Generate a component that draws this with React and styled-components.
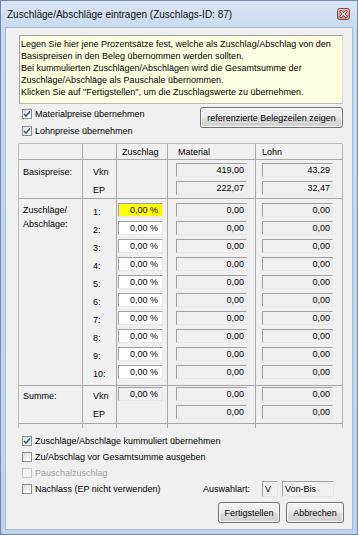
import React from 'react';
import styled, { createGlobalStyle } from 'styled-components';

const Global = createGlobalStyle`
  html, body { margin: 0; padding: 0; width: 358px; height: 535px; overflow: hidden; background: #fff; }
  body { font-family: "Liberation Sans", Arial, sans-serif; font-size: 9px; color: #000; }
  * { box-sizing: border-box; }
`;

const Window = styled.div`
  width: 358px;
  height: 535px;
  border: 1px solid #6f88aa;
  background: linear-gradient(180deg, #dbe6f4 0px, #c9daef 26px, #c0d3ea 100%);
  display: flex;
  flex-direction: column;
`;

const TitleBar = styled.div`
  height: 26px;
  flex: none;
  display: flex;
  align-items: center;
  justify-content: space-between;
  padding: 0 7px 0 6px;
`;

const Title = styled.span`
  font-family: "Liberation Sans", Arial, sans-serif;
  font-size: 10px;
  color: #111;
  white-space: nowrap;
`;

const Client = styled.div`
  flex: 1;
  margin: 0 4px 4px 4px;
  border: 1px solid #a7b9d0;
  background: #f0f0f0;
  display: flex;
  flex-direction: column;
`;

const InfoBox = styled.div`
  margin: 7px 9px 0 13px;
  height: 69px;
  background: #ffffe1;
  border: 1px solid;
  border-color: #a0a0a0 #dcdcdc #b8b8b8 #a0a0a0;
  padding: 2px 1px;
  line-height: 12px;
`;

const Line = styled.div`
  white-space: nowrap;
`;

const TopRow = styled.div`
  margin: 1px 9px 0 16px;
  height: 34px;
  display: flex;
  justify-content: space-between;
  align-items: flex-start;
`;

const CheckCol = styled.div`
  display: flex;
  flex-direction: column;
`;

const CheckItem = styled.div`
  display: flex;
  align-items: center;
  gap: 3px;
  height: ${p => p.$h || 17}px;
  color: ${p => (p.$disabled ? '#a3a3a3' : '#000')};
  white-space: nowrap;
  flex: ${p => (p.$grow ? 1 : 'none')};
`;

const Box = styled.span`
  width: 10px;
  height: 10px;
  flex: none;
  border: 1px solid ${p => (p.$disabled ? '#c6c6c6' : '#8e8f8f')};
  background: ${p => (p.$disabled ? '#f4f4f4' : 'linear-gradient(135deg, #d9d9d9 0%, #f4f4f4 60%, #ffffff 100%)')};
  display: flex;
  align-items: center;
  justify-content: center;
`;

const Button = styled.button`
  width: ${p => p.$w}px;
  height: 21px;
  margin-top: ${p => p.$mt || 0}px;
  padding: 0;
  border: 1px solid #707070;
  border-radius: 3px;
  background: linear-gradient(180deg, #f2f2f2 0%, #ebebeb 48%, #dddddd 52%, #cfcfcf 100%);
  box-shadow: inset 0 0 0 1px #fbfbfb;
  font-family: "Liberation Sans", Arial, sans-serif;
  font-size: 9px;
  color: #000;
  white-space: nowrap;
`;

const Table = styled.div`
  margin: 4px 9px 0 12px;
  border: 1px solid #b9b9b9;
  border-bottom: none;
  border-radius: 2px 2px 0 0;
`;

const Section = styled.div`
  display: grid;
  grid-template-columns: 64px 34px 51px 88px 86px;
  height: ${p => p.$h}px;
  border-top: ${p => (p.$first ? 'none' : '1px solid #a6a6a6')};
`;

const Col = styled.div`
  display: flex;
  flex-direction: column;
  gap: 4px;
  padding-top: ${p => p.$pt || 0}px;
  padding-left: ${p => p.$pl || 0}px;
  border-right: ${p => (p.$last ? 'none' : '1px solid #a6a6a6')};
  align-items: flex-start;
  justify-content: ${p => (p.$center ? 'center' : 'flex-start')};
`;

const Label = styled.div`
  height: 14px;
  line-height: 14px;
  white-space: nowrap;
`;

const BigLabel = styled.div`
  line-height: 14px;
`;

const Field = styled.div`
  width: ${p => p.$w}px;
  height: 14px;
  margin-left: ${p => p.$ml || 0}px;
  border: 1px solid;
  border-color: #a0a0a0 #e6e6e6 #e6e6e6 #a0a0a0;
  background: ${p => (p.$hl ? '#ffff00' : p.$edit ? '#ffffff' : '#f0f0f0')};
  text-align: ${p => (p.$left ? 'left' : 'right')};
  padding: 0 ${p => p.$pr ?? 2}px 0 ${p => p.$pl ?? 0}px;
  line-height: 12px;
  white-space: nowrap;
`;

const BottomChecks = styled.div`
  margin: 5px 0 0 16px;
  display: flex;
  flex-direction: column;
`;

const LastRow = styled.div`
  display: flex;
  align-items: center;
  height: 16px;
  padding-right: 18px;
`;

const SelLabel = styled.span`
  width: 59px;
  flex: none;
  white-space: nowrap;
`;

const SelBox = styled.div`
  width: ${p => p.$w}px;
  height: 16px;
  margin-left: ${p => p.$ml || 0}px;
  border: 1px solid;
  border-color: #a0a0a0 #e6e6e6 #e6e6e6 #a0a0a0;
  background: #f0f0f0;
  padding-left: 2px;
  line-height: 14px;
  white-space: nowrap;
`;

const ButtonRow = styled.div`
  margin: 5px 8px 0 0;
  display: flex;
  justify-content: flex-end;
  gap: 6px;
`;

const CloseButton = () => (
  <svg width="13" height="12" viewBox="0 0 13 12">
    <defs>
      <linearGradient id="cg" x1="0" y1="0" x2="0" y2="1">
        <stop offset="0" stopColor="#e9c2bd" />
        <stop offset="1" stopColor="#c98a84" />
      </linearGradient>
    </defs>
    <rect x="0.5" y="0.5" width="12" height="11" rx="2" fill="url(#cg)" stroke="#8a4a46" />
    <path d="M4 3.5 L9 8.5 M9 3.5 L4 8.5" stroke="#5a3a3a" strokeWidth="2.6" strokeLinecap="square" />
    <path d="M4 3.5 L9 8.5 M9 3.5 L4 8.5" stroke="#ffffff" strokeWidth="1.1" strokeLinecap="square" />
  </svg>
);

const Check = ({ checked, disabled, children, h, grow }) => (
  <CheckItem $h={h} $disabled={disabled} $grow={grow}>
    <Box $disabled={disabled}>
      {checked && (
        <svg width="8" height="8" viewBox="0 0 8 8">
          <path d="M1 4 L3 6.2 L7 1.3" fill="none" stroke="#33507f" strokeWidth="1.5" />
        </svg>
      )}
    </Box>
    <span>{children}</span>
  </CheckItem>
);

const rows = ['1:', '2:', '3:', '4:', '5:', '6:', '7:', '8:', '9:', '10:'];

export default function App() {
  return (
    <>
      <Global />
      <Window>
        <TitleBar>
          <Title>Zuschläge/Abschläge eintragen (Zuschlags-ID: 87)</Title>
          <CloseButton />
        </TitleBar>
        <Client>
          <InfoBox>
            <Line>Legen Sie hier jene Prozentsätze fest, welche als Zuschlag/Abschlag von den</Line>
            <Line>Basispreisen in den Beleg übernommen werden sollten.</Line>
            <Line>Bei kummulierten Zuschlägen/Abschlägen wird die Gesamtsumme der</Line>
            <Line>Zuschläge/Abschläge als Pauschale übernommen.</Line>
            <Line>Klicken Sie auf "Fertigstellen", um die Zuschlagswerte zu übernehmen.</Line>
          </InfoBox>

          <TopRow>
            <CheckCol>
              <Check checked>Materialpreise übernehmen</Check>
              <Check checked>Lohnpreise übernehmen</Check>
            </CheckCol>
            <Button $w={143} $mt={2}>referenzierte Belegzeilen zeigen</Button>
          </TopRow>

          <Table>
            <Section $first $h={15}>
              <Col />
              <Col />
              <Col $pl={5} $center><span>Zuschlag</span></Col>
              <Col $pl={10} $center><span>Material</span></Col>
              <Col $pl={6} $center $last><span>Lohn</span></Col>
            </Section>

            <Section $h={39}>
              <Col $pl={4} $pt={5}><Label>Basispreise:</Label></Col>
              <Col $pl={10} $pt={5}><Label>Vkn</Label><Label>EP</Label></Col>
              <Col />
              <Col $pt={3}>
                <Field $w={71} $ml={8}>419,00</Field>
                <Field $w={71} $ml={8}>222,07</Field>
              </Col>
              <Col $pt={3} $last>
                <Field $w={71} $ml={6}>43,29</Field>
                <Field $w={71} $ml={6}>32,47</Field>
              </Col>
            </Section>

            <Section $h={187}>
              <Col $pl={4} $pt={4}><BigLabel>Zuschläge/<br />Abschläge:</BigLabel></Col>
              <Col $pl={10} $pt={6}>
                {rows.map(r => <Label key={r}>{r}</Label>)}
              </Col>
              <Col $pt={4}>
                {rows.map((r, i) => (
                  <Field key={r} $w={45} $ml={1} $pr={4} $edit $hl={i === 0}>0,00 %</Field>
                ))}
              </Col>
              <Col $pt={4}>
                {rows.map(r => <Field key={r} $w={71} $ml={8}>0,00</Field>)}
              </Col>
              <Col $pt={4} $last>
                {rows.map(r => <Field key={r} $w={71} $ml={6}>0,00</Field>)}
              </Col>
            </Section>

            <Section $h={38}>
              <Col $pl={4} $pt={3}><Label>Summe:</Label></Col>
              <Col $pl={10} $pt={3}><Label>Vkn</Label><Label>EP</Label></Col>
              <Col $pt={1}><Field $w={45} $ml={1} $pr={4}>0,00 %</Field></Col>
              <Col $pt={1}>
                <Field $w={71} $ml={8}>0,00</Field>
                <Field $w={71} $ml={8}>0,00</Field>
              </Col>
              <Col $pt={1} $last>
                <Field $w={71} $ml={6}>0,00</Field>
                <Field $w={71} $ml={6}>0,00</Field>
              </Col>
            </Section>

            <Section $h={5}>
              <Col /><Col /><Col /><Col /><Col $last />
            </Section>
          </Table>

          <BottomChecks>
            <Check checked h={16}>Zuschläge/Abschläge kummuliert übernehmen</Check>
            <Check h={16}>Zu/Abschlag vor Gesamtsumme ausgeben</Check>
            <Check disabled h={16}>Pauschalzuschlag</Check>
            <LastRow>
              <Check h={16} grow>Nachlass (EP nicht verwenden)</Check>
              <SelLabel>Auswahlart:</SelLabel>
              <SelBox $w={16}>V</SelBox>
              <SelBox $w={52} $ml={4}>Von-Bis</SelBox>
            </LastRow>
          </BottomChecks>

          <ButtonRow>
            <Button $w={62}>Fertigstellen</Button>
            <Button $w={58}>Abbrechen</Button>
          </ButtonRow>
        </Client>
      </Window>
    </>
  );
}
